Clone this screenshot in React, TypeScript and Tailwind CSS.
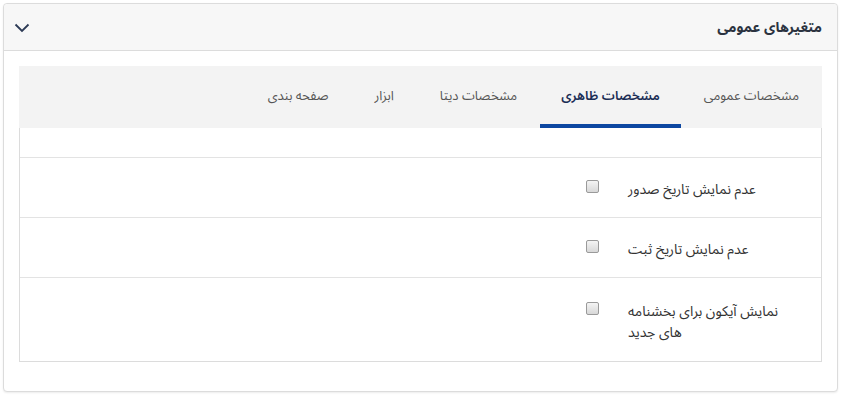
import { useState } from 'react';

type Tab = { id: string; label: string };

const tabs: Tab[] = [
  { id: 'general', label: 'مشخصات عمومی' },
  { id: 'visual', label: 'مشخصات ظاهری' },
  { id: 'data', label: 'مشخصات دیتا' },
  { id: 'tools', label: 'ابزار' },
  { id: 'paging', label: 'صفحه بندی' },
];

const options = [
  { id: 'hideIssueDate', label: 'عدم نمایش تاریخ صدور' },
  { id: 'hideRegisterDate', label: 'عدم نمایش تاریخ ثبت' },
  { id: 'newIcon', label: 'نمایش آیکون برای بخشنامه های جدید' },
];

function Checkbox({ checked, onToggle }: { checked: boolean; onToggle: () => void }) {
  return (
    <button
      onClick={onToggle}
      className="mt-[-2px] h-[13px] w-[13px] shrink-0 rounded-[2px] border border-[#9a9a9a] bg-gradient-to-b from-[#f4f4f4] to-[#d8d8d8]"
    >
      {checked && (
        <svg viewBox="0 0 12 12" className="h-full w-full">
          <polyline points="2.5,6 5,8.5 9.5,3" fill="none" stroke="#333" strokeWidth="1.6" />
        </svg>
      )}
    </button>
  );
}

export default function App() {
  const [active, setActive] = useState('visual');
  const [checked, setChecked] = useState<Record<string, boolean>>({});

  return (
    <div
      dir="rtl"
      className="min-h-screen bg-white pl-[3px] pr-[7px] pt-[3px] text-[13px] text-[#333]"
      style={{ fontFamily: '"Noto Sans Arabic", "DejaVu Sans", Tahoma, sans-serif' }}
    >
      <div className="rounded-[4px] border border-[#dcdcdc] bg-white pb-[29px] shadow-[0_1px_2px_rgba(0,0,0,0.08)]">
        {/* هدر */}
        <div className="flex h-[47px] items-center justify-between rounded-t-[4px] border-b border-[#dcdcdc] bg-[#f7f7f7] pl-[10px] pr-[15px]">
          <h2 className="text-[14px] font-bold text-[#2b3340]">متغیرهای عمومی</h2>
          <svg width="16" height="10" viewBox="0 0 16 10" className="mt-[2px]">
            <polyline points="1.5,1.5 8,8 14.5,1.5" fill="none" stroke="#2c3a55" strokeWidth="1.8" />
          </svg>
        </div>

        {/* پنل داخلی */}
        <div className="mx-[15px] mt-[15px]">
          <div className="flex h-[62px] items-stretch bg-[#f3f3f3]">
            {tabs.map((t) => (
              <button
                key={t.id}
                onClick={() => setActive(t.id)}
                className={`flex items-center border-b-4 pt-[4px] ${
                  active === t.id
                    ? 'border-[#0d47a1] px-[21px] font-semibold text-[#1a2d55]'
                    : 'border-transparent px-[23px] text-[#555]'
                }`}
              >
                {t.label}
              </button>
            ))}
          </div>

          <div className="border-x border-b border-[#dcdcdc]">
            <div className="h-[30px] border-b border-[#e3e3e3]" />
            {options.map((o, i) => {
              const last = i === options.length - 1;
              return (
                <div
                  key={o.id}
                  className={`flex items-start ${
                    last ? 'pb-[18px] pt-[23px]' : 'border-b border-[#e3e3e3] pb-[17px] pt-[21px]'
                  }`}
                >
                  <label className="mr-[31px] w-[162px] text-left text-[14px] leading-[21px] text-[#333]">
                    {o.label}
                  </label>
                  <div className="mr-[29px]">
                    <Checkbox
                      checked={!!checked[o.id]}
                      onToggle={() => setChecked((p) => ({ ...p, [o.id]: !p[o.id] }))}
                    />
                  </div>
                </div>
              );
            })}
          </div>
        </div>
      </div>
    </div>
  );
}
